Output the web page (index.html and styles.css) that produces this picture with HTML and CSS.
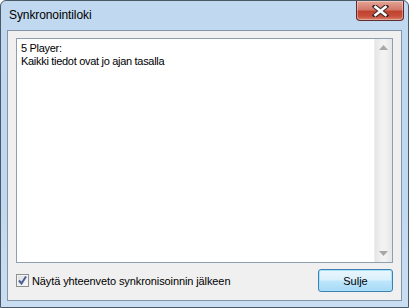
FILE: index.html
```html
<!DOCTYPE html>
<html lang="fi">
<head>
  <meta charset="UTF-8">
  <title>Synkronointiloki</title>
  <link rel="stylesheet" href="styles.css">
</head>
<body>

  <div class="window">
    <!-- Title bar -->
    <div class="titlebar">
      <span class="title">Synkronointiloki</span>
      <div class="close-btn">
        <svg width="17" height="12" viewBox="0 0 17 12">
          <path d="M3 1.5 L14 10.5 M14 1.5 L3 10.5" stroke="#3d2a2a" stroke-width="4.6" stroke-linecap="square"/>
          <path d="M3.5 2 L13.5 10 M13.5 2 L3.5 10" stroke="#ffffff" stroke-width="2.6" stroke-linecap="square"/>
        </svg>
      </div>
    </div>

    <!-- Client area -->
    <div class="client">
      <div class="logbox">
        <div class="log-text">
          <div>5 Player:</div>
          <div>Kaikki tiedot ovat jo ajan tasalla</div>
        </div>
        <div class="scrollbar">
          <div class="arrow">
            <svg width="9" height="5" viewBox="0 0 9 5"><path d="M0 5 L4.5 0 L9 5 Z" fill="#a8a8a8"/></svg>
          </div>
          <div class="arrow">
            <svg width="9" height="5" viewBox="0 0 9 5"><path d="M0 0 L9 0 L4.5 5 Z" fill="#a8a8a8"/></svg>
          </div>
        </div>
      </div>

      <div class="bottom-row">
        <label class="check">
          <span class="checkbox">
            <svg width="9" height="9" viewBox="0 0 9 9">
              <path d="M1 4.5 L3.5 7.5 L8 0.5" stroke="#4a5f97" stroke-width="2" fill="none"/>
            </svg>
          </span>
          Näytä yhteenveto synkronisoinnin jälkeen
        </label>
        <button class="button">Sulje</button>
      </div>
    </div>
  </div>

</body>
</html>
```

FILE: styles.css
```css
body {
  margin: 0;
  font-family: "Liberation Sans", Arial, sans-serif;
  font-size: 11px;
}
.window {
  width: 409px;
  height: 308px;
  box-sizing: border-box;
  border: 1px solid #4b5866;
  border-radius: 6px 6px 0 0;
  background: linear-gradient(to bottom, #c0d9f1 0%, #bfd8ef 60%, #c9def2 100%);
  display: flex;
  flex-direction: column;
  padding: 0 6px 6px 6px;
}
.titlebar {
  height: 29px;
  display: flex;
  align-items: flex-start;
  justify-content: space-between;
}
.title {
  margin-top: 7px;
  margin-left: 2px;
  font-size: 12px;
  letter-spacing: -0.1px;
  color: #000;
}
.close-btn {
  width: 46px;
  height: 19px;
  margin-right: -2px;
  border: 1px solid #5e2c2c;
  border-top: none;
  border-radius: 0 0 4px 4px;
  background: linear-gradient(to bottom, #e3a696 0%, #d3796b 45%, #c0442f 55%, #c84f3c 80%, #d8816b 100%);
  display: flex;
  align-items: center;
  justify-content: center;
  box-shadow: inset 0 0 0 1px rgba(255, 255, 255, 0.35);
}
.client {
  flex: 1;
  border: 1px solid #8595a7;
  background: #f0f0f0;
  padding: 7px 8px 8px 8px;
  display: flex;
  flex-direction: column;
}
.logbox {
  flex: 1;
  border: 1px solid #8f9fb2;
  background: #fff;
  display: flex;
}
.log-text {
  flex: 1;
  padding: 3px 4px;
  line-height: 13px;
  letter-spacing: -0.3px;
  color: #000;
}
.scrollbar {
  width: 17px;
  background: linear-gradient(to right, #e6e6e6, #f2f2f2 40%, #f2f2f2 60%, #e6e6e6);
  border-left: 1px solid #eeeeee;
  display: flex;
  flex-direction: column;
  justify-content: space-between;
}
.arrow {
  height: 17px;
  display: flex;
  align-items: center;
  justify-content: center;
}
.bottom-row {
  margin-top: 6px;
  display: flex;
  align-items: center;
  justify-content: space-between;
}
.check {
  display: flex;
  align-items: center;
  gap: 3px;
  letter-spacing: -0.1px;
  color: #000;
}
.checkbox {
  width: 11px;
  height: 11px;
  border: 1px solid #8e8f8f;
  background: linear-gradient(135deg, #dcdcdc, #fbfbfb);
  box-shadow: inset 0 0 0 1px #f4f4f4;
  display: flex;
  align-items: center;
  justify-content: center;
}
.button {
  width: 75px;
  height: 23px;
  font-family: inherit;
  font-size: 11px;
  color: #000;
  border: 1px solid #3c7fb1;
  border-radius: 3px;
  background: linear-gradient(to bottom, #eaf6fd 0%, #d9f0fc 48%, #bee6fd 52%, #a7d9f5 100%);
  box-shadow: inset 0 0 0 1px #a9e3fb;
  padding: 0;
}
```
